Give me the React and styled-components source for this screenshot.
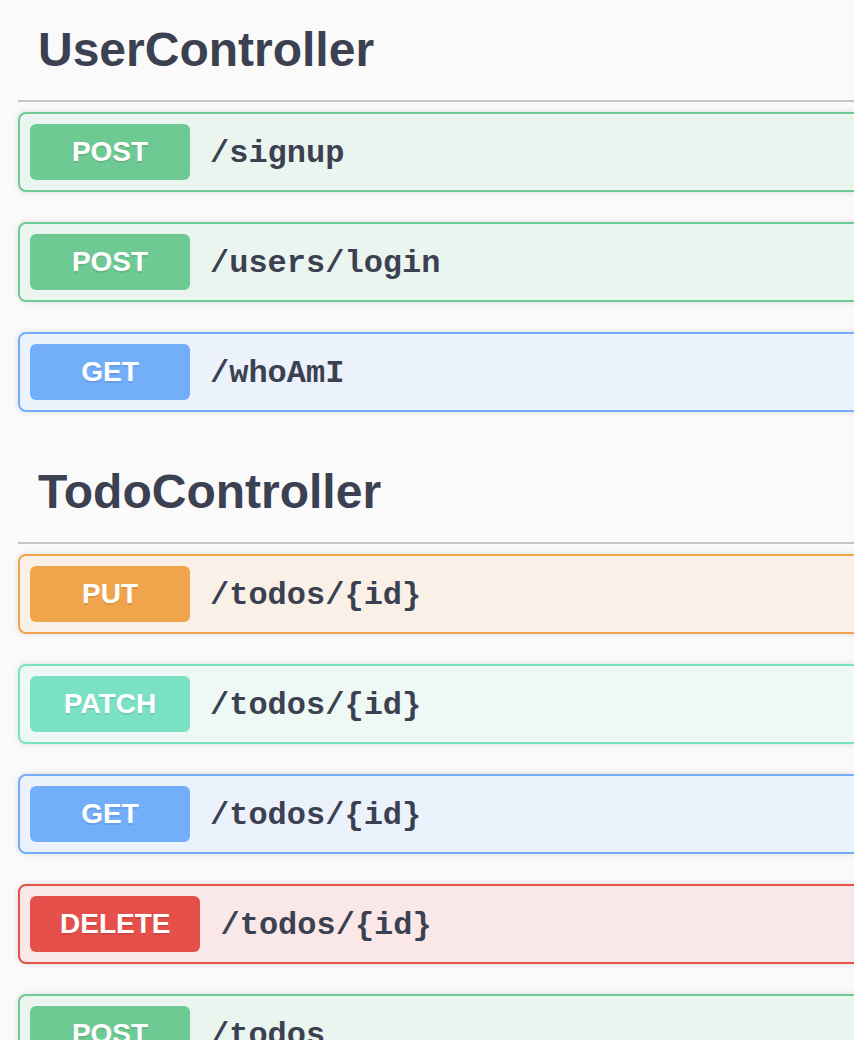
import styled, { createGlobalStyle } from 'styled-components'

const GlobalStyle = createGlobalStyle`
  html, body {
    margin: 0;
    padding: 0;
    background: #fafafa;
    overflow: hidden;
  }
  body {
    font-family: "Liberation Sans", Arial, sans-serif;
    color: #3b4151;
  }
`

const METHODS = {
  post: { main: '#6fc993', bg: '#ebf5ef' },
  get: { main: '#73aff9', bg: '#ebf2fc' },
  put: { main: '#f0a54c', bg: '#f9f1e8' },
  patch: { main: '#7be1c4', bg: '#eef8f4' },
  delete: { main: '#e5504b', bg: '#f9e8e7' },
}

const Page = styled.div`
  width: 1200px;
  padding: 0 0 0 18px;
`

const Section = styled.section`
  display: flex;
  flex-direction: column;
`

const TagTitle = styled.h4`
  margin: 0 0 10px;
  padding: 22px 40px 22px 20px;
  font-size: 48px;
  line-height: 56px;
  font-weight: 700;
  color: #3b4151;
  border-bottom: 2px solid #c4c5ca;
`

const OpBlock = styled.div`
  box-sizing: border-box;
  height: 80px;
  display: flex;
  align-items: center;
  padding: 0 10px;
  margin-bottom: 30px;
  border: 2px solid ${p => METHODS[p.method].main};
  background: ${p => METHODS[p.method].bg};
  border-radius: 8px;
  box-shadow: 0 0 6px rgba(0, 0, 0, 0.12);
`

const MethodBadge = styled.span`
  box-sizing: border-box;
  min-width: 160px;
  height: 56px;
  padding: 0 30px;
  display: flex;
  align-items: center;
  justify-content: center;
  border-radius: 6px;
  background: ${p => METHODS[p.method].main};
  color: #fff;
  font-size: 28px;
  font-weight: 700;
  text-shadow: 0 2px 0 rgba(0, 0, 0, 0.1);
`

const OpPath = styled.span`
  padding: 2px 20px 0;
  font-family: "Liberation Mono", "Courier New", monospace;
  font-size: 32px;
  font-weight: 700;
  color: #3b4151;
`

const sections = [
  {
    name: 'UserController',
    ops: [
      ['post', '/signup'],
      ['post', '/users/login'],
      ['get', '/whoAmI'],
    ],
  },
  {
    name: 'TodoController',
    ops: [
      ['put', '/todos/{id}'],
      ['patch', '/todos/{id}'],
      ['get', '/todos/{id}'],
      ['delete', '/todos/{id}'],
      ['post', '/todos'],
    ],
  },
]

export default function App() {
  return (
    <Page>
      <GlobalStyle />
      {sections.map(section => (
        <Section key={section.name}>
          <TagTitle>{section.name}</TagTitle>
          {section.ops.map(([method, path], i) => (
            <OpBlock key={i} method={method}>
              <MethodBadge method={method}>{method.toUpperCase()}</MethodBadge>
              <OpPath>{path}</OpPath>
            </OpBlock>
          ))}
        </Section>
      ))}
    </Page>
  )
}
